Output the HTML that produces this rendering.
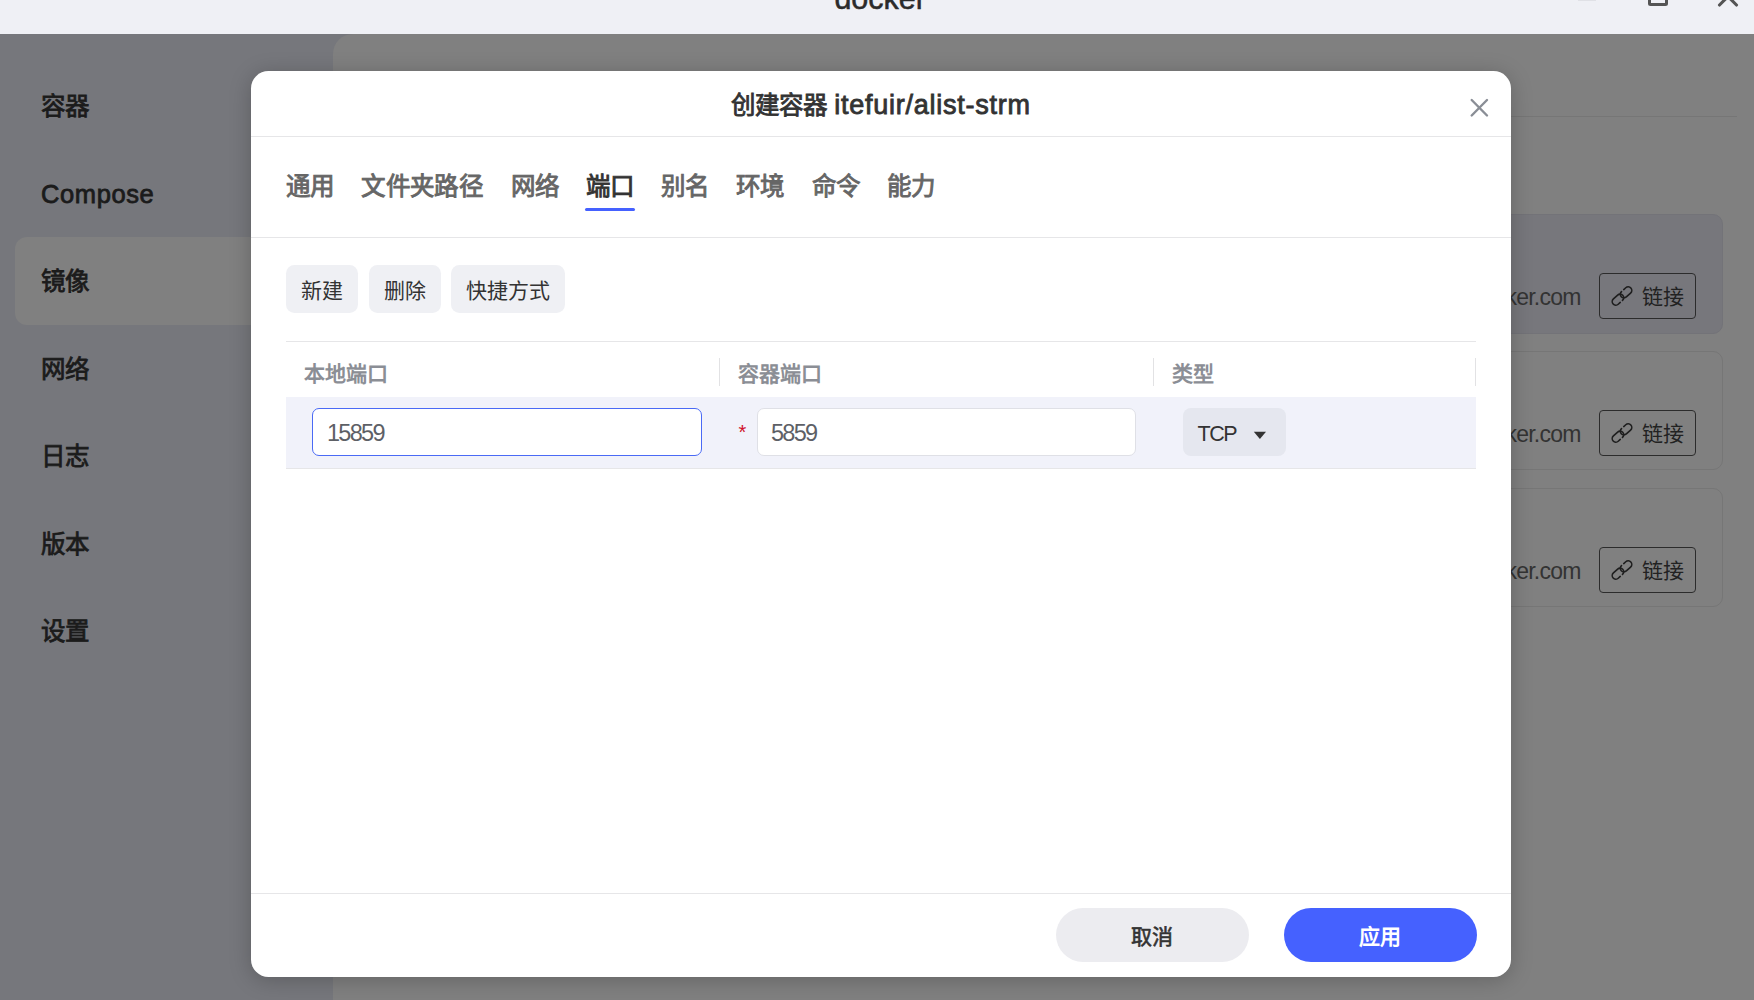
<!DOCTYPE html>
<html lang="zh-CN">
<head>
<meta charset="utf-8">
<style>
html,body{margin:0;padding:0;}
body{width:1754px;height:1000px;overflow:hidden;position:relative;background:#76777c;font-family:"Liberation Sans",sans-serif;}
.abs{position:absolute;}
#titlebar{left:0;top:0;width:1754px;height:34px;background:#eff0f5;overflow:hidden;}
#titlebar .t{left:3.2px;width:1754px;text-align:center;top:-19px;font-size:30.5px;color:#2b2b2b;-webkit-text-stroke:0.5px #2b2b2b;line-height:34px;}
#side{left:0;top:34px;width:333px;height:966px;background:#76777c;}
.si{left:41px;font-size:24.5px;font-weight:400;-webkit-text-stroke:0.8px #1b1b1b;color:#1b1b1b;line-height:30px;white-space:nowrap;}
#main{left:333px;top:34px;width:1421px;height:966px;background:#808080;border-top-left-radius:20px;overflow:hidden;}
.card{left:900px;width:489.5px;height:119.3px;border-radius:10px;box-sizing:border-box;border:1.2px solid #767676;}
.link{width:97px;height:45.5px;box-sizing:border-box;border:1.5px solid #2c2c2c;border-radius:4px;}
.link span{position:absolute;left:42px;top:8px;font-size:21px;color:#222;line-height:30px;}
.link svg{position:absolute;left:7.4px;top:6.5px;}
.dom{font-size:23px;letter-spacing:-0.8px;color:#333;line-height:30px;white-space:nowrap;right:173.5px;}
#modal{left:251px;top:70.9px;width:1260px;height:906.3px;background:#fff;border-radius:17.5px;box-shadow:0 3px 22px rgba(0,0,0,0.22);overflow:hidden;}
.hline{height:1.5px;margin-top:-0.3px;background:#e6e6e8;}
.title{left:0;width:1260px;text-align:center;font-size:24.5px;font-weight:400;-webkit-text-stroke:0.85px #333;color:#333;white-space:nowrap;}
.tabs{left:35px;top:100px;white-space:nowrap;font-size:0;}
.tab{white-space:nowrap;font-size:24.5px;font-weight:400;-webkit-text-stroke:0.9px #666;color:#666;line-height:30px;letter-spacing:0.3px;}
.tab.on{color:#333;-webkit-text-stroke:0.9px #333;}
.tab.on:after{content:"";position:absolute;left:-1px;right:-1px;top:36.5px;height:3px;border-radius:2px;background:#4561ff;}
.btn{background:#eff0f4;border-radius:8.5px;font-size:21px;color:#333;text-align:center;line-height:52px;height:48px;}
.th{font-size:21px;font-weight:700;color:#8b8e95;line-height:30px;white-space:nowrap;}
.vd{width:1px;background:#e2e2e4;top:287px;height:28px;}
.inp{box-sizing:border-box;background:#fff;border-radius:7px;height:48.5px;top:337px;}
.inp span{position:absolute;left:14px;top:9.2px;font-size:23.5px;letter-spacing:-1.7px;color:#5d6066;line-height:30px;}
.pill{top:837px;height:54.5px;width:192.5px;border-radius:28px;text-align:center;line-height:58px;font-size:21px;font-weight:700;}
</style>
</head>
<body>
<div id="titlebar" class="abs">
  <div class="abs t">docker</div>
  <div class="abs" style="left:1578px;top:-1px;width:18px;height:2px;background:#e0e1e6;"></div>
  <div class="abs" style="left:1647.5px;top:-15px;width:20.5px;height:20.5px;box-sizing:border-box;border:3px solid #545454;border-radius:2.5px;"></div>
  <svg class="abs" style="left:1714px;top:-14px" width="28" height="24" viewBox="0 0 28 24"><path d="M5.5 19 L14 10.5 L22.5 19" stroke="#545454" stroke-width="3.1" fill="none" stroke-linecap="round"/></svg>
</div>
<div id="side" class="abs">
  <div class="abs" style="left:15px;top:203px;width:330px;height:88px;border-radius:12px;background:#808080;"></div>
  <div class="abs si" style="top:58px">容器</div>
  <div class="abs si" style="top:144.5px"><span style="font-size:25.5px;letter-spacing:0.6px;">Compose</span></div>
  <div class="abs si" style="top:233px">镜像</div>
  <div class="abs si" style="top:321px">网络</div>
  <div class="abs si" style="top:408px">日志</div>
  <div class="abs si" style="top:496px">版本</div>
  <div class="abs si" style="top:583px">设置</div>
</div>
<div id="main" class="abs">
  <div class="abs" style="left:40px;top:81.5px;width:1364px;height:1.5px;background:#767676;"></div>
  <div class="abs card" style="top:180.3px;background:#77777c;border-color:#737378;"></div>
  <div class="abs card" style="top:317.4px;height:118.4px;"></div>
  <div class="abs card" style="top:454.4px;height:118.3px;"></div>
  <div class="abs dom" style="top:248px;">docker.com</div>
  <div class="abs dom" style="top:385px;">docker.com</div>
  <div class="abs dom" style="top:522px;">docker.com</div>
  <div class="abs link" style="left:1266px;top:239px;"><svg width="30" height="30" viewBox="-15 -15 30 30"><g transform="rotate(-42)" fill="none" stroke="#1e1e1e" stroke-width="1.6" stroke-linecap="round"><path d="M5.6 -3.6 L8.3 -3.6 A3.6 3.6 0 0 1 8.3 3.6 L2.6 3.6 A3.6 3.6 0 0 1 2.6 -3.6"/><path d="M-5.6 3.6 L-8.3 3.6 A3.6 3.6 0 0 1 -8.3 -3.6 L-2.6 -3.6 A3.6 3.6 0 0 1 -2.6 3.6"/></g></svg><span>链接</span></div>
  <div class="abs link" style="left:1266px;top:376px;"><svg width="30" height="30" viewBox="-15 -15 30 30"><g transform="rotate(-42)" fill="none" stroke="#1e1e1e" stroke-width="1.6" stroke-linecap="round"><path d="M5.6 -3.6 L8.3 -3.6 A3.6 3.6 0 0 1 8.3 3.6 L2.6 3.6 A3.6 3.6 0 0 1 2.6 -3.6"/><path d="M-5.6 3.6 L-8.3 3.6 A3.6 3.6 0 0 1 -8.3 -3.6 L-2.6 -3.6 A3.6 3.6 0 0 1 -2.6 3.6"/></g></svg><span>链接</span></div>
  <div class="abs link" style="left:1266px;top:513px;"><svg width="30" height="30" viewBox="-15 -15 30 30"><g transform="rotate(-42)" fill="none" stroke="#1e1e1e" stroke-width="1.6" stroke-linecap="round"><path d="M5.6 -3.6 L8.3 -3.6 A3.6 3.6 0 0 1 8.3 3.6 L2.6 3.6 A3.6 3.6 0 0 1 2.6 -3.6"/><path d="M-5.6 3.6 L-8.3 3.6 A3.6 3.6 0 0 1 -8.3 -3.6 L-2.6 -3.6 A3.6 3.6 0 0 1 -2.6 3.6"/></g></svg><span>链接</span></div>
</div>

<div id="modal" class="abs">
  <div class="abs title" style="top:19.5px;line-height:30px;">创建容器 <span style="font-size:27px;letter-spacing:0.75px;">itefuir/alist-strm</span></div>
  <svg class="abs" style="left:1215px;top:23px" width="28" height="28" viewBox="0 0 28 28"><g stroke="#8a8e96" stroke-width="2.4" stroke-linecap="round"><path d="M5.7 6 L21 21.5"/><path d="M21 6 L5.7 21.5"/></g></svg>
  <div class="abs hline" style="left:0;top:65px;width:1260px;"></div>
  <span class="abs tab" style="left:35.0px;top:101px;">通用</span><span class="abs tab" style="left:110.4px;top:101px;">文件夹路径</span><span class="abs tab" style="left:260.1px;top:101px;">网络</span><span class="abs tab on" style="left:334.6px;top:101px;">端口</span><span class="abs tab" style="left:409.6px;top:101px;">别名</span><span class="abs tab" style="left:484.6px;top:101px;">环境</span><span class="abs tab" style="left:561.1px;top:101px;">命令</span><span class="abs tab" style="left:635.6px;top:101px;">能力</span>
  <div class="abs hline" style="left:0;top:166px;width:1260px;"></div>
  <div class="abs btn" style="left:35px;top:194px;width:72px;">新建</div>
  <div class="abs btn" style="left:118px;top:194px;width:72px;">删除</div>
  <div class="abs btn" style="left:200px;top:194px;width:114px;">快捷方式</div>
  <div class="abs hline" style="left:35px;top:270px;width:1190px;"></div>
  <div class="abs th" style="left:53px;top:288px;">本地端口</div>
  <div class="abs th" style="left:487px;top:288px;">容器端口</div>
  <div class="abs th" style="left:921px;top:288px;">类型</div>
  <div class="abs vd" style="left:468px;"></div>
  <div class="abs vd" style="left:902px;"></div>
  <div class="abs vd" style="left:1224px;"></div>
  <div class="abs" style="left:35px;top:326px;width:1190px;height:71px;background:#f1f2fa;"></div>
  <div class="abs hline" style="left:35px;top:397px;width:1190px;"></div>
  <div class="abs inp" style="left:61px;width:389.5px;border:1.6px solid #4a6af5;"><span>15859</span></div>
  <div class="abs" style="left:487.5px;top:349px;font-size:20px;color:#d0112b;line-height:24px;">*</div>
  <div class="abs inp" style="left:505.5px;width:379px;border:1px solid #dfe0e6;"><span style="left:13.5px">5859</span></div>
  <div class="abs" style="left:931.5px;top:337.3px;width:103.5px;height:47.5px;border-radius:8px;background:#e5e7ef;">
    <span class="abs" style="left:15px;top:10.5px;font-size:21.5px;letter-spacing:-1.5px;color:#333;line-height:30px;">TCP</span>
    <svg class="abs" style="left:70.5px;top:23px" width="14" height="9" viewBox="0 0 14 9"><path d="M0.8 0.8 L13 0.8 L6.9 8 Z" fill="#333"/></svg>
  </div>
  <div class="abs hline" style="left:0;top:822px;width:1260px;"></div>
  <div class="abs pill" style="left:805px;background:#ececf0;color:#333;font-weight:400;-webkit-text-stroke:0.6px #333;">取消</div>
  <div class="abs pill" style="left:1033px;background:#4561ff;color:#fff;">应用</div>
</div>
</body>
</html>
